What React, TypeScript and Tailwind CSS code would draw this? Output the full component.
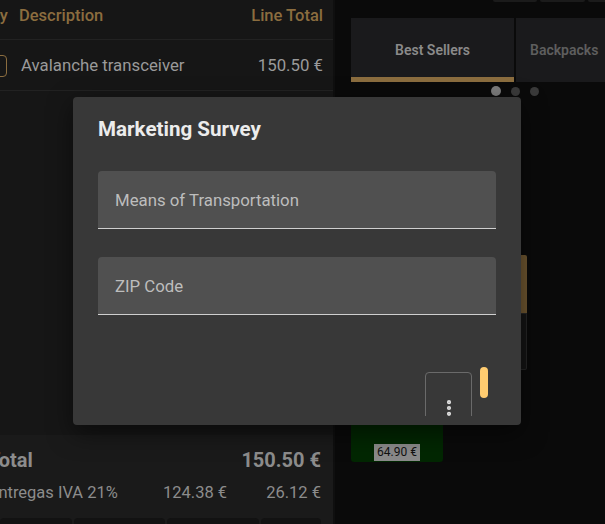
import * as React from "react";
import { EllipsisVertical } from "lucide-react";

// Background POS screen (dimmed) with the survey dialog on top
function OrderPanel() {
  return (
    <div className="relative flex h-full w-[333px] shrink-0 flex-col overflow-hidden bg-[#161616]">
      {/* header */}
      <div className="flex h-[40px] items-start border-b border-[#222] pr-[10px] pt-[4px] text-[16.5px] font-medium leading-[24px] text-[#8b6d3f]">
        <span className="-ml-[17px] w-[36px] shrink-0">Qty</span>
        <span className="flex-1">Description</span>
        <span>Line Total</span>
      </div>
      {/* line */}
      <div className="flex h-[51px] items-center border-b border-[#222] pr-[10px] pt-[2px] text-[16.8px] text-[#9a9a9a]">
        <span className="-ml-[13px] mr-[14px] h-[22px] w-[20px] shrink-0 rounded-[4px] border border-[#8b6d3f]" />
        <span className="flex-1">Avalanche transceiver</span>
        <span>150.50 €</span>
      </div>
      <div className="flex-1" />
      {/* totals */}
      <div className="flex h-[89px] flex-col bg-[#1a1a1a] pr-[12px]">
        <div className="mt-[11px] flex items-center justify-between text-xl font-bold text-[#8c8c8c]">
          <span className="-ml-[12px]">Total</span>
          <span>150.50 €</span>
        </div>
        <div className="mt-[7px] flex items-center text-[16.5px] text-[#8c8c8c]">
          <span className="-ml-[11px] flex-1">Entregas IVA 21%</span>
          <span className="w-[65px]">124.38 €</span>
          <span className="w-[93px] text-right">26.12 €</span>
        </div>
        <div className="mt-auto flex h-[6px] gap-[2px]">
          <div className="w-[73px] rounded-t-[4px] bg-[#121212]" />
          <div className="w-[92px] rounded-t-[4px] bg-[#121212]" />
          <div className="w-[93px] rounded-t-[4px] bg-[#121212]" />
          <div className="w-[61px] rounded-t-[4px] bg-[#121212]" />
        </div>
      </div>
    </div>
  );
}

function CatalogPanel() {
  return (
    <div className="flex h-full flex-1 flex-col border-l-2 border-[#0f0f0f] bg-[#0a0a0a] pl-[16px]">
      {/* top small tabs */}
      <div className="flex h-[2px] gap-[3px] pl-[142px]">
        <div className="w-[44px] rounded-b-[3px] bg-[#1b1b1b]" />
        <div className="w-[45px] rounded-b-[3px] bg-[#1b1b1b]" />
        <div className="flex-1 rounded-bl-[3px] bg-[#1b1b1b]" />
      </div>
      {/* category tabs */}
      <div className="mt-[16px] flex h-[64px] gap-[2px]">
        <div className="flex w-[163px] flex-col bg-[#1a1a1c]">
          <div className="flex flex-1 items-center justify-center pt-[4px] text-sm font-semibold text-[#8a8a8a]">
            Best Sellers
          </div>
          <div className="h-[5px] bg-[#8b6d3f]" />
        </div>
        <div className="flex flex-1 items-center bg-[#1a1a1c] pl-[14px] text-sm font-semibold text-[#5e5e5e]">
          <span className="whitespace-nowrap">Backpacks</span>
        </div>
      </div>
      {/* pager dots */}
      <div className="mt-[4px] flex h-[10px] items-center gap-[10px] pl-[140px]">
        <span className="h-[10px] w-[10px] rounded-full bg-[#7c7c7c]" />
        <span className="h-[9px] w-[9px] rounded-full bg-[#3a3a3a]" />
        <span className="h-[9px] w-[9px] rounded-full bg-[#3a3a3a]" />
      </div>
      {/* products behind the dialog */}
      <div className="flex flex-1">
        <div className="flex w-[92px] flex-col">
          <div className="mt-[324px] flex h-[42px] items-end justify-center rounded-b-[3px] bg-[#022702] pb-[1px]">
            <span className="bg-[#8a8a8a] px-[3px] py-[1px] text-xs leading-[15px] text-[#111]">64.90 €</span>
          </div>
        </div>
        <div className="ml-[78px] flex w-[6px] flex-col">
          <div className="mt-[159px] h-[58px] rounded-tr-[2px] bg-[#6e5630]" />
          <div className="h-[57px] rounded-br-[2px] border border-l-0 border-[#262626] bg-[#141414]" />
        </div>
      </div>
    </div>
  );
}

function SurveyDialog() {
  return (
    <div className="absolute left-[73px] top-[97px] flex h-[328px] w-[448px] flex-col overflow-hidden rounded-[4px] bg-[#383838] pb-[9px] shadow-[0_8px_24px_rgba(0,0,0,0.5)]">
      <h2 className="mt-[18px] pl-[25px] text-[20.6px] font-bold leading-[28px] text-[#ececec]">Marketing Survey</h2>
      <div className="mt-[28px] flex flex-col gap-[28px] pl-[25px] pr-[25px]">
        <div className="flex h-[58px] items-center rounded-t-[4px] border-b border-[#cfcfcf] bg-[#505050] px-[17px] pt-[3px] text-[16.8px] text-[#bdbdbd]">
          Means of Transportation
        </div>
        <div className="flex h-[58px] items-center rounded-t-[4px] border-b border-[#cfcfcf] bg-[#505050] px-[17px] pt-[3px] text-[16.8px] text-[#bdbdbd]">
          ZIP Code
        </div>
      </div>
      <div className="flex flex-1 items-start justify-end gap-[8px] overflow-hidden pr-[33px] pt-[52px]">
        <div className="mt-[5px] flex h-[80px] w-[47px] justify-center rounded-t-[4px] border border-[#6a6a6a] pt-[25px]">
          <EllipsisVertical className="h-[20px] w-[20px] text-[#e0e0e0]" strokeWidth={3} />
        </div>
        <div className="h-[31px] w-[8px] rounded-full bg-[#ffcc70]" />
      </div>
    </div>
  );
}

export default function App() {
  return (
    <div
      className="relative flex h-[524px] w-[605px] overflow-hidden bg-[#0a0a0a]"
      style={{ fontFamily: "Roboto, 'Liberation Sans', sans-serif" }}
    >
      <OrderPanel />
      <CatalogPanel />
      <SurveyDialog />
    </div>
  );
}
